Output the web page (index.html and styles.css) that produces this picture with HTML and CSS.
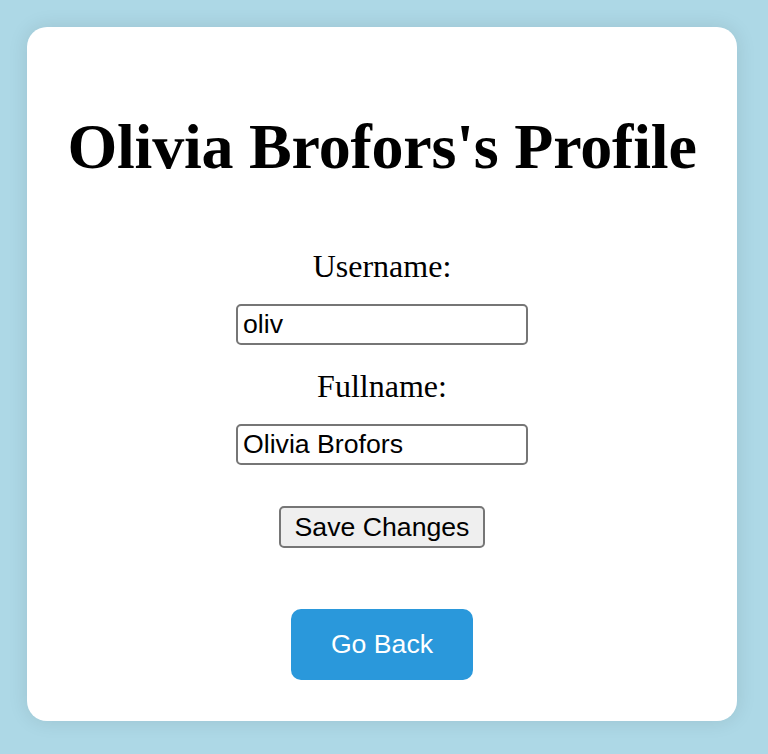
FILE: index.html
```html
<!DOCTYPE html>
<html lang="en">
<head>
<meta charset="utf-8">
<title>Olivia Brofors's Profile</title>
<link rel="stylesheet" href="styles.css">
</head>
<body>
<div class="card">
  <h1 class="title">Olivia Brofors's Profile</h1>
  <form class="profile-form">
    <label class="field-label" for="username">Username:</label>
    <input class="field-input" id="username" type="text" value="oliv">
    <label class="field-label" for="fullname">Fullname:</label>
    <input class="field-input" id="fullname" type="text" value="Olivia Brofors">
    <button class="save-btn" type="button">Save Changes</button>
  </form>
  <a class="back-btn" href="#">Go Back</a>
</div>
</body>
</html>
```

FILE: styles.css
```css
html, body {
  margin: 0;
  padding: 0;
}
body {
  background: #add8e6;
  font-family: "Liberation Serif", "Times New Roman", serif;
  padding: 27px 31px 33px 27px;
}
.card {
  width: 710px;
  height: 694px;
  box-sizing: border-box;
  background: #ffffff;
  border-radius: 20px;
  box-shadow: 0 0 20px rgba(0, 0, 0, 0.1);
  padding: 40px;
  display: flex;
  flex-direction: column;
  align-items: center;
}
.title {
  font-size: 64px;
  letter-spacing: -0.2px;
  white-space: nowrap;
  font-weight: bold;
  margin: 43px 0 0 0;
  line-height: 74px;
  text-align: center;
  color: #000;
  flex-shrink: 0;
}
.profile-form {
  margin-top: 64px;
  display: flex;
  flex-direction: column;
  align-items: center;
  flex-shrink: 0;
}
.field-label {
  font-size: 32px;
  line-height: 37px;
  color: #000;
  margin-bottom: 19px;
}
.field-input {
  width: 292px;
  height: 41px;
  box-sizing: border-box;
  border: 2px solid #767676;
  border-radius: 5px;
  padding: 0 5px;
  font-family: "Liberation Sans", Arial, sans-serif;
  font-size: 26.67px;
  color: #000;
  background: #fff;
  margin: 0 0 23px 0;
}
.save-btn {
  margin-top: 18px;
  height: 42px;
  box-sizing: border-box;
  padding: 0 14px;
  border: 2px solid #767676;
  border-radius: 5px;
  background: #efefef;
  font-family: "Liberation Sans", Arial, sans-serif;
  font-size: 26.67px;
  color: #000;
}
.back-btn {
  margin-top: 61px;
  width: 182px;
  height: 71px;
  flex-shrink: 0;
  box-sizing: border-box;
  display: flex;
  align-items: center;
  justify-content: center;
  background: #2a98db;
  color: #fff;
  border-radius: 10px;
  text-decoration: none;
  font-family: "Liberation Sans", Arial, sans-serif;
  font-size: 26.67px;
}
```
